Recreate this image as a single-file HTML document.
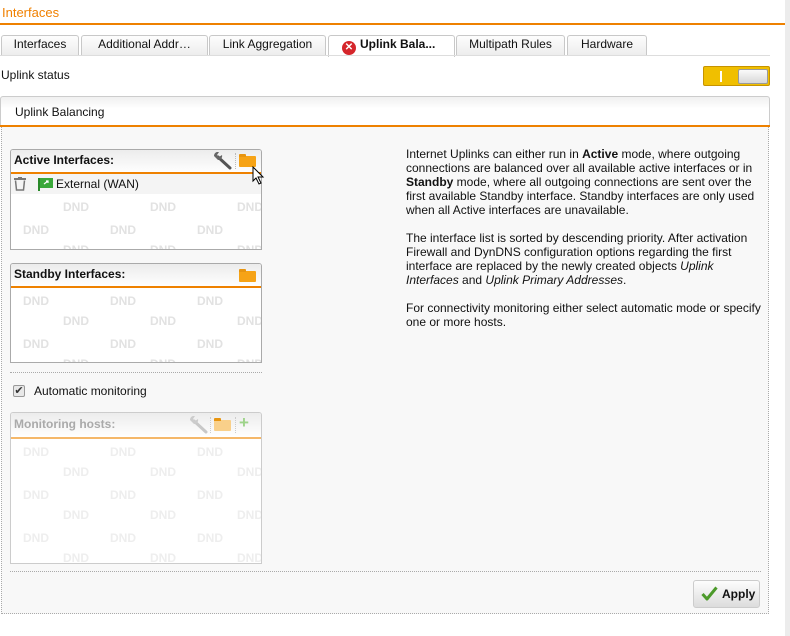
<!DOCTYPE html>
<html><head><meta charset="utf-8"><style>
*{box-sizing:border-box}
body{margin:0;width:790px;height:636px;background:#fff;font-family:"Liberation Sans",Arial,sans-serif;font-size:12px;color:#111;position:relative;overflow:hidden}
.abs{position:absolute}
.strip{left:785px;top:0;width:5px;height:636px;background:#ececec}
.title{left:2px;top:5px;color:#f08000;font-size:13px}
.hline{left:0;top:23px;width:785px;height:2px;background:#ee8100}
.tab{top:35px;height:21px;border:1px solid #c8c8c8;border-bottom:none;border-radius:3px 3px 0 0;background:linear-gradient(#fdfdfd,#ececec);text-align:center;line-height:16px;font-size:12px;color:#111}
.tabline{left:0;top:55px;width:770px;height:1px;background:#ddd}
.toggle{left:703px;top:66px;width:67px;height:20px;background:#f0bf00;border:1px solid #c69300;border-radius:2px}
.phead{left:0;top:96px;width:770px;height:30px;border:1px solid #ccc;border-bottom:none;border-radius:3px 3px 0 0;background:linear-gradient(#f0f0f0,#fff 40%);padding:8px 0 0 14px;font-size:12px}
.pline{left:0;top:125px;width:770px;height:2px;background:#ee8100}
.box{left:10px;width:252px;border:1px solid #aaa;border-radius:3px 3px 0 0;background:#fff;overflow:hidden}
.bh{position:absolute;left:0;top:0;width:100%;height:23px;background:linear-gradient(#ececec,#fff);font-weight:bold;padding:3px 0 0 3px;font-size:12px}
.bl{position:absolute;left:0;top:22px;width:100%;height:2px;background:#ee8100}
.dnd{position:absolute;left:0;top:24px}
.folder{position:absolute;width:17px;height:11px;background:#f6a316;border-radius:1px}
.folder:before{content:"";position:absolute;left:0;top:-2px;width:7px;height:3px;background:#e89510;border-radius:1px 1px 0 0}
.txt{left:406px;top:147px;width:362px;line-height:14px;font-size:12px}
.txt p{margin:0 0 14px 0}
</style></head><body>
<div class="abs strip"></div>
<div class="abs title">Interfaces</div>
<div class="abs hline"></div>

<div class="abs tab" style="left:1px;width:78px">Interfaces</div>
<div class="abs tab" style="left:81px;width:127px">Additional Addr…</div>
<div class="abs tab" style="left:209px;width:117px">Link Aggregation</div>
<div class="abs tab" style="left:328px;width:127px;background:#fff;height:22px;font-weight:bold;text-align:left;padding-left:13px"><span style="display:inline-block;width:14px;height:14px;border-radius:50%;background:#d5262b;color:#fff;font-size:10px;line-height:14px;text-align:center;vertical-align:-2px;margin-right:4px">✕</span>Uplink Bala...</div>
<div class="abs tab" style="left:456px;width:109px">Multipath Rules</div>
<div class="abs tab" style="left:567px;width:80px">Hardware</div>
<div class="abs tabline"></div>

<div class="abs" style="left:1px;top:68px">Uplink status</div>
<div class="abs toggle"><div class="abs" style="left:16px;top:4px;width:2px;height:11px;background:#fff"></div><div class="abs" style="left:34px;top:2px;width:30px;height:15px;background:linear-gradient(#fafafa,#d8d8d8);border:1px solid #999;border-radius:2px"></div></div>

<div class="abs phead">Uplink Balancing</div>
<div class="abs pline"></div>
<div class="abs" style="left:1px;top:127px;width:768px;height:487px;border:1px dotted #aaa;border-top:none;background:#f8f8f8"></div>
<div class="abs" style="left:10px;top:571px;width:751px;border-top:1px dotted #aaa"></div>
<div class="abs" style="left:10px;top:372px;width:252px;border-top:1px dotted #aaa"></div>

<svg width="0" height="0" style="position:absolute"><defs>
<pattern id="p1" width="87" height="43" patternUnits="userSpaceOnUse"><g font-family="Liberation Sans,Arial,sans-serif" font-size="12" font-weight="bold" fill="#e2e2e2"><text x="12" y="17">DND</text><text x="52" y="37">DND</text><text x="52" y="-6">DND</text></g></pattern>
<pattern id="p2" width="87" height="43" patternUnits="userSpaceOnUse"><g font-family="Liberation Sans,Arial,sans-serif" font-size="12" font-weight="bold" fill="#eeeeee"><text x="12" y="17">DND</text><text x="52" y="37">DND</text><text x="52" y="-6">DND</text></g></pattern>
</defs></svg>

<!-- Active -->
<div class="abs box" style="top:149px;height:101px">
 <svg class="dnd" width="252" height="80"><rect width="252" height="80" fill="url(#p1)"/></svg>
 <div class="bh">Active Interfaces:</div><div class="bl"></div>
 <svg class="abs" style="left:202px;top:2px" width="20" height="18" viewBox="0 0 20 18"><path d="M5 5 L17 16" stroke="#555" stroke-width="3" stroke-linecap="round"/><path d="M1 4 A4 4 0 0 1 6 0 L4 3 L6 5 L9 3 A4 4 0 0 1 5 8 Z" fill="#666"/></svg>
 <div class="abs" style="left:224px;top:3px;height:16px;border-left:1px dotted #bbb"></div>
 <div class="folder" style="left:228px;top:6px"></div>
 <div class="abs" style="left:0;top:24px;width:252px;height:20px;background:#f4f4f4"></div>
 <svg class="abs" style="left:3px;top:27px" width="12" height="14"><rect x="0" y="1" width="12" height="2" fill="#777"/><rect x="4" y="0" width="4" height="1" fill="#777"/><path d="M1.5 3.5 L2.5 13 H9.5 L10.5 3.5" fill="none" stroke="#777" stroke-width="1.5"/></svg>
 <svg class="abs" style="left:27px;top:28px" width="15" height="13"><rect x="0" y="0" width="2" height="13" fill="#2a8a2a"/><rect x="2" y="0" width="13" height="10" fill="#3aa83a"/><path d="M6 6 L10 3 M8 3 h2 v2" stroke="#fff" stroke-width="1.2" fill="none"/></svg>
 <div class="abs" style="left:45px;top:27px">External (WAN)</div>
</div>
<svg class="abs" style="left:252px;top:166px" width="14" height="20"><path d="M1 1 L1 15 L4 12 L7 18 L9 17 L6 11 L11 11 Z" fill="#fff" stroke="#000" stroke-width="1"/></svg>

<!-- Standby -->
<div class="abs box" style="top:263px;height:100px">
 <svg class="dnd" width="252" height="80"><rect width="252" height="80" fill="url(#p1)"/></svg>
 <div class="bh">Standby Interfaces:</div><div class="bl"></div>
 <div class="folder" style="left:228px;top:7px"></div>
</div>

<div class="abs" style="left:13px;top:385px;width:12px;height:12px;border:1px solid #999;border-radius:2px;background:#e8e8e8;font-size:11px;line-height:10px;text-align:center;color:#333">✔</div>
<div class="abs" style="left:34px;top:384px">Automatic monitoring</div>

<!-- Monitoring -->
<div class="abs box" style="top:412px;height:152px;border-color:#ccc">
 <svg class="dnd" style="top:26px" width="252" height="126"><rect width="252" height="126" fill="url(#p2)"/></svg>
 <div class="bh" style="color:#aaa;height:24px;padding-top:4px">Monitoring hosts:</div><div class="bl" style="top:24px;background:#f5b86a"></div>
 <svg class="abs" style="left:178px;top:3px" width="20" height="18" viewBox="0 0 20 18"><path d="M5 5 L17 16" stroke="#c8c8c8" stroke-width="3" stroke-linecap="round"/><path d="M1 4 A4 4 0 0 1 6 0 L4 3 L6 5 L9 3 A4 4 0 0 1 5 8 Z" fill="#ccc"/></svg>
 <div class="abs" style="left:199px;top:4px;height:16px;border-left:1px dotted #ccc"></div>
 <div class="folder" style="left:203px;top:7px;background:#f9d08a"></div>
 <div class="abs" style="left:224px;top:4px;height:16px;border-left:1px dotted #ccc"></div>
 <div class="abs" style="left:228px;top:0px;color:#9ed48a;font-size:17px;font-weight:bold;line-height:20px">+</div>
</div>

<div class="abs txt">
<p>Internet Uplinks can either run in <b>Active</b> mode, where outgoing connections are balanced over all available active interfaces or in <b>Standby</b> mode, where all outgoing connections are sent over the first available Standby interface. Standby interfaces are only used when all Active interfaces are unavailable.</p>
<p>The interface list is sorted by descending priority. After activation Firewall and DynDNS configuration options regarding the first interface are replaced by the newly created objects <i>Uplink Interfaces</i> and <i>Uplink Primary Addresses</i>.</p>
<p>For connectivity monitoring either select automatic mode or specify one or more hosts.</p>
</div>

<div class="abs" style="left:693px;top:580px;width:67px;height:28px;border:1px solid #ccc;border-radius:3px;background:linear-gradient(#fdfdfd,#dcdcdc);font-weight:bold;padding:6px 0 0 28px">Apply</div>
<svg class="abs" style="left:701px;top:586px" width="17" height="15"><path d="M1.5 8 L6 13 L15.5 1.5" stroke="#4c9a2a" stroke-width="3" fill="none" stroke-linejoin="round"/></svg>
</body></html>
